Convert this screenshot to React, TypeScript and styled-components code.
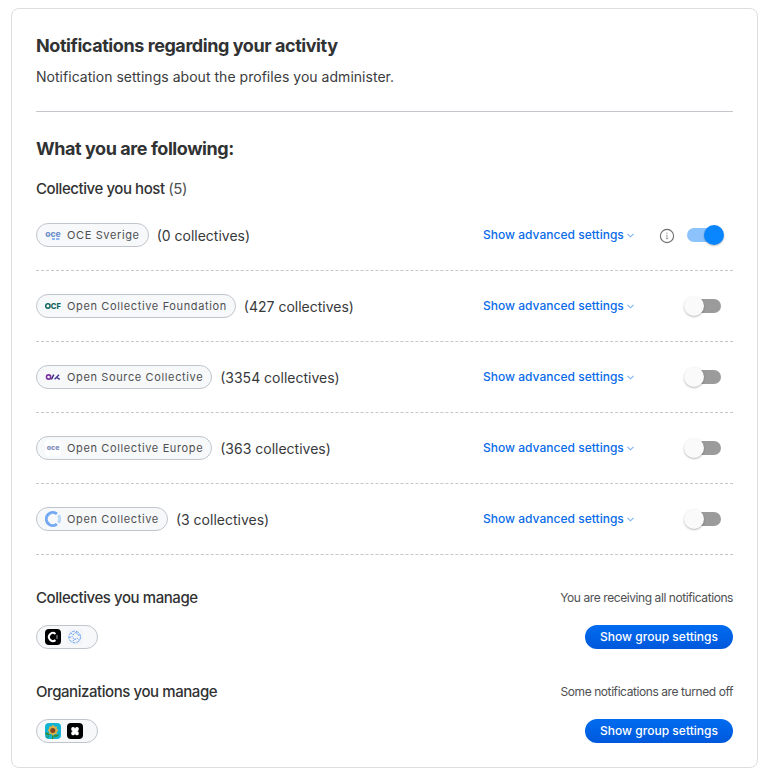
import React from 'react';
import styled, { createGlobalStyle } from 'styled-components';

const GlobalStyle = createGlobalStyle`
  *, *::before, *::after { box-sizing: border-box; }
  body {
    margin: 0;
    background: #fff;
    color: #313233;
    font-family: Inter, "Liberation Sans", sans-serif;
  }
  h1, h2, h3, p { margin: 0; }
`;

const Card = styled.main`
  width: 747px;
  margin: 8px 0 0 11px;
  padding: 24px;
  border: 1px solid #dcdddf;
  border-radius: 8px;
  background: #fff;
`;

const Title = styled.h1`
  font-size: 18px;
  font-weight: 700;
  line-height: 26px;
  letter-spacing: -0.43px;
`;

const Description = styled.p`
  margin-top: 8px;
  color: #3b3c3e;
  font-size: 14px;
  line-height: 20px;
  letter-spacing: 0.03px;
`;

const Divider = styled.hr`
  height: 1px;
  margin: 24px 0;
  border: 0;
  background: #c4c7cc;
`;

const SectionTitle = styled.h3`
  font-size: 15px;
  font-weight: 500;
  line-height: 22px;
  letter-spacing: -0.43px;
`;

const HostTitle = styled(SectionTitle)`
  margin-top: 16px;
`;

const TitleCount = styled.span`
  color: #4e5052;
  font-weight: 400;
`;

const Row = styled.div`
  display: flex;
  align-items: center;
  height: 71px;
  border-bottom: 1px dashed #c4c7cc;
`;

const Chip = styled.span<{ $group?: boolean }>`
  display: inline-flex;
  align-items: center;
  gap: 6px;
  height: 24px;
  padding: 0 ${(p) => (p.$group ? 14 : 8)}px 0 8px;
  border: 1px solid #c0c5cc;
  border-radius: 12px;
  background: #f7f8fa;
  color: #4e5052;
  font-size: 11px;
  line-height: 16px;
  letter-spacing: 0.63px;
  white-space: nowrap;
`;

const Avatar = styled.svg`
  display: block;
  flex: none;
  width: 16px;
  height: 16px;
  border-radius: 4px;
`;

const HostedCount = styled.span`
  margin: 2px 0 0 8px;
  color: #38393b;
  font-size: 14px;
  line-height: 20px;
`;

const Actions = styled.div`
  display: flex;
  align-items: center;
  width: 250px;
  margin-left: auto;
  padding-right: 9px;
`;

const SettingsLink = styled.button`
  display: inline-flex;
  align-items: center;
  gap: 3px;
  margin-right: auto;
  padding: 0;
  border: 0;
  background: none;
  color: #0a6be8;
  font: 500 12px/16px Inter, "Liberation Sans", sans-serif;
  letter-spacing: 0.02px;
  white-space: nowrap;
`;

const InfoIcon = styled.svg`
  width: 16px;
  height: 16px;
  margin: 2px 9px 0 0;
`;

const Toggle = styled.span`
  display: flex;
  align-items: center;
  width: 40px;
  height: 20px;
`;

const Track = styled.span<{ $on: boolean }>`
  flex: none;
  width: 34px;
  height: 14px;
  margin: 0 3px;
  border-radius: 7px;
  background: ${(p) => (p.$on ? '#8cc3fc' : '#9b9b9b')};
`;

const Thumb = styled.span<{ $on: boolean }>`
  flex: none;
  width: 20px;
  height: 20px;
  margin-left: ${(p) => (p.$on ? -20 : -40)}px;
  border-radius: 50%;
  background: ${(p) => (p.$on ? '#0985fd' : '#fafafa')};
  box-shadow: 0 1px 2px rgba(0, 0, 0, 0.28);
`;

const Group = styled.section`
  margin-top: 32px;
`;

const GroupLine = styled.div`
  display: flex;
  align-items: center;
  justify-content: space-between;
  & + & { margin-top: 16px; }
`;

const Status = styled.p`
  color: #4e5052;
  font-size: 12px;
  line-height: 18px;
  letter-spacing: -0.42px;
`;

const GroupButton = styled.button`
  width: 148px;
  height: 24px;
  padding: 0;
  border: 0;
  border-radius: 12px;
  background: linear-gradient(180deg, #006cf0 0%, #0058db 100%);
  color: #fff;
  font: 500 12px/24px Inter, "Liberation Sans", sans-serif;
  letter-spacing: 0.03px;
  white-space: nowrap;
`;

const Mark = styled.text`
  font-family: Inter, "Liberation Sans", sans-serif;
  font-weight: 800;
  letter-spacing: 0;
`;

const SverigeAvatar = () => (
  <Avatar viewBox="0 0 16 16">
    <Mark x="0.3" y="9.6" fontSize="8" textLength="15.4" lengthAdjust="spacingAndGlyphs" fill="#6c8ecb">oce</Mark>
    <path d="M7 12h3M11 12h3.5" stroke="#6ea5ee" strokeWidth="1.3" />
  </Avatar>
);

const FoundationAvatar = () => (
  <Avatar viewBox="0 0 16 16">
    <circle cx="2.9" cy="8" r="2.2" fill="none" stroke="#12665e" strokeWidth="1.5" />
    <Mark x="5.8" y="10.8" fontSize="8" textLength="10" lengthAdjust="spacingAndGlyphs" fill="#12665e">CF</Mark>
  </Avatar>
);

const SourceAvatar = () => (
  <Avatar viewBox="0 0 16 16">
    <circle cx="3.6" cy="8" r="2.1" fill="none" stroke="#7b2fa0" strokeWidth="1.6" />
    <path d="M6.4 10.5 8.8 5.7" stroke="#3f2d85" strokeWidth="1.5" />
    <path d="m9.6 10.2 4.4-4.4M12 8.6l2.8 1.8" stroke="#4a3b9a" strokeWidth="1.5" fill="none" />
  </Avatar>
);

const EuropeAvatar = () => (
  <Avatar viewBox="0 0 16 16">
    <rect width="16" height="16" fill="#fff" />
    <Mark x="1.8" y="10" fontSize="6.8" textLength="12.6" lengthAdjust="spacingAndGlyphs" fill="#7d8db9">oce</Mark>
  </Avatar>
);

const CollectiveAvatar = () => (
  <Avatar viewBox="0 0 16 16" fill="none" strokeWidth="3">
    <path d="M11.9 2.9a6.5 6.5 0 1 0 0 10.2" stroke="#73a8f2" />
    <path d="M13.4 4.2a6.5 6.5 0 0 1 0 7.6" stroke="#b9d7fb" />
  </Avatar>
);

const DarkCollectiveAvatar = () => (
  <Avatar viewBox="0 0 16 16" fill="none" strokeWidth="2">
    <rect width="16" height="16" fill="#000" />
    <path d="M10.5 4.9a4 4 0 1 0 0 6.2" stroke="#fff" />
    <path d="M11.6 6a4 4 0 0 1 0 4" stroke="#555" />
  </Avatar>
);

const NetworkAvatar = () => (
  <Avatar viewBox="0 0 16 16" fill="none" stroke="#69a3f0" strokeWidth="1">
    <rect width="16" height="16" fill="#f2f4f7" stroke="none" />
    <circle cx="7.7" cy="8" r="5.8" strokeDasharray="3 1" />
    <path d="m4 4 2 2 3-3 2 3 2 .5M2.4 8.5l3-1 2 3-2 2M7.5 10.5l3-1 2 2" strokeDasharray="1.8 .7" />
  </Avatar>
);

const SunflowerAvatar = () => (
  <Avatar viewBox="0 0 16 16">
    <rect width="16" height="16" fill="#11b4d3" />
    <path d="M0 9.2 3 10l3 2-3 .5-2-1ZM9 12l5.4-.8-2.1 2.5L9 14ZM7 12h1.5v4H7ZM1 14l3-1-1 2Z" fill="#348b3c" />
    <g fill="#dcae45">
      <circle cx="8" cy="7.3" r="4.2" />
      <ellipse cx="8" cy="7.3" rx="1.5" ry="5.2" />
      <ellipse cx="8" cy="7.3" rx="1.5" ry="5.2" transform="rotate(45 8 7.3)" />
      <ellipse cx="8" cy="7.3" rx="1.5" ry="5.2" transform="rotate(90 8 7.3)" />
      <ellipse cx="8" cy="7.3" rx="1.5" ry="5.2" transform="rotate(135 8 7.3)" />
    </g>
    <circle cx="7.8" cy="7.5" r="2.5" fill="#7d4627" />
  </Avatar>
);

const CloverAvatar = () => (
  <Avatar viewBox="0 0 16 16">
    <rect width="16" height="16" fill="#000" />
    <g fill="#fff">
      <rect x="4.3" y="3.9" width="3.6" height="4" rx="1.5" />
      <rect x="8.1" y="3.9" width="3.6" height="4" rx="1.5" />
      <rect x="4.3" y="8.3" width="3.6" height="4" rx="1.5" />
      <rect x="8.1" y="8.3" width="3.6" height="4" rx="1.5" />
      <rect x="5.6" y="5.6" width="4.8" height="5" />
    </g>
  </Avatar>
);

const Chevron = () => (
  <svg width="7" height="5" viewBox="0 0 7 5" fill="none">
    <path d="M.5.8 3.5 3.8 6.5.8" stroke="#7db2f6" strokeWidth="1.1" />
  </svg>
);

const hosts = [
  { name: 'OCE Sverige', count: 0, Icon: SverigeAvatar, on: true },
  { name: 'Open Collective Foundation', count: 427, Icon: FoundationAvatar, on: false },
  { name: 'Open Source Collective', count: 3354, Icon: SourceAvatar, on: false },
  { name: 'Open Collective Europe', count: 363, Icon: EuropeAvatar, on: false },
  { name: 'Open Collective', count: 3, Icon: CollectiveAvatar, on: false },
];

const groups = [
  {
    title: 'Collectives you manage',
    status: 'You are receiving all notifications',
    icons: [DarkCollectiveAvatar, NetworkAvatar],
  },
  {
    title: 'Organizations you manage',
    status: 'Some notifications are turned off',
    icons: [SunflowerAvatar, CloverAvatar],
  },
];

export default function App() {
  return (
    <>
      <GlobalStyle />
      <Card>
        <Title>Notifications regarding your activity</Title>
        <Description>Notification settings about the profiles you administer.</Description>
        <Divider />
        <Title as="h2">What you are following:</Title>
        <HostTitle>
          Collective you host <TitleCount>(5)</TitleCount>
        </HostTitle>
        {hosts.map(({ name, count, Icon, on }) => (
          <Row key={name}>
            <Chip>
              <Icon />
              {name}
            </Chip>
            <HostedCount>{`(${count} collectives)`}</HostedCount>
            <Actions>
              <SettingsLink>
                Show advanced settings
                <Chevron />
              </SettingsLink>
              {on && (
                <InfoIcon viewBox="0 0 16 16" fill="none">
                  <circle cx="8" cy="8" r="6.6" stroke="#6b6d70" strokeWidth="1.1" />
                  <path d="M7.2 7.2H8v3.4M7 10.7h2.2" stroke="#9a9c9f" />
                  <circle cx="8" cy="5.2" r=".7" fill="#9a9c9f" />
                </InfoIcon>
              )}
              <Toggle role="switch" aria-checked={on}>
                <Track $on={on} />
                <Thumb $on={on} />
              </Toggle>
            </Actions>
          </Row>
        ))}
        {groups.map(({ title, status, icons }) => (
          <Group key={title}>
            <GroupLine>
              <SectionTitle>{title}</SectionTitle>
              <Status>{status}</Status>
            </GroupLine>
            <GroupLine>
              <Chip $group>
                {icons.map((Icon, i) => (
                  <Icon key={i} />
                ))}
              </Chip>
              <GroupButton>Show group settings</GroupButton>
            </GroupLine>
          </Group>
        ))}
      </Card>
    </>
  );
}
